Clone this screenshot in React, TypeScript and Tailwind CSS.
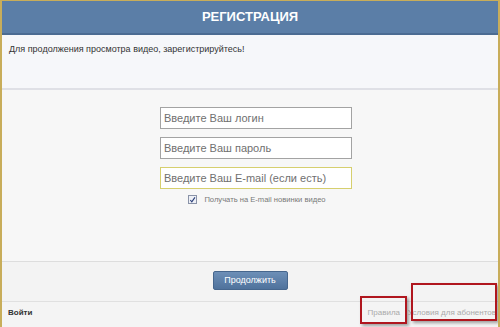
import React from 'react';

export default function App() {
  return (
    <div
      className="relative w-[500px] h-[327px] overflow-hidden bg-[#f4f4f4] border-l-2 border-t border-r-2 border-[#c8ad5a]"
      style={{ fontFamily: '"Liberation Sans", Arial, sans-serif' }}
    >
      {/* header */}
      <div className="h-[34px] bg-[#5b7ea7] border-b-2 border-[#4b6b92] flex items-center justify-center">
        <h1 className="text-white font-bold text-[13px]">РЕГИСТРАЦИЯ</h1>
      </div>

      {/* notice */}
      <div className="h-[55px] bg-[#f6f7fa] border-b-2 border-[#dfe0e6] px-[7px] pt-[8px]">
        <p className="text-[9px] text-[#333]">Для продолжения просмотра видео, зарегистрируйтесь!</p>
      </div>

      {/* form */}
      <div className="h-[172px] bg-[#f7f7f7] border-b border-[#dddddd] flex flex-col items-center pt-[17px]">
        <div className="flex flex-col gap-[8px] w-[192px] ml-[12px]">
          <input
            className="h-[22px] w-full bg-white border border-[#a3a3a3] px-[3px] text-[11px] text-[#666] placeholder:text-[#707070] outline-none"
            placeholder="Введите Ваш логин"
          />
          <input
            className="h-[22px] w-full bg-white border border-[#a3a3a3] px-[3px] text-[11px] text-[#666] placeholder:text-[#707070] outline-none"
            placeholder="Введите Ваш пароль"
          />
          <input
            className="h-[22px] w-full bg-white border border-[#d6cf6e] px-[3px] text-[11px] text-[#666] placeholder:text-[#707070] outline-none"
            placeholder="Введите Ваш E-mail (если есть)"
          />
        </div>
        <label className="flex items-center gap-[7px] mt-[5px] ml-[14px]">
          <span className="w-[9px] h-[9px] border border-[#8a93a8] bg-[#eef0f6] flex items-center justify-center">
            <svg width="8" height="8" viewBox="0 0 8 8">
              <path d="M1.5 4 L3.2 6 L6.8 1" stroke="#2a3f7a" strokeWidth="1.3" fill="none" />
            </svg>
          </span>
          <span className="text-[7.6px] text-[#777]">Получать на E-mail новинки видео</span>
        </label>
      </div>

      {/* button */}
      <div className="h-[40px] bg-[#f3f3f3] border-b border-[#e0e0e0] flex justify-center items-start pt-[9px]">
        <button className="w-[75px] h-[19px] rounded-[2px] bg-gradient-to-b from-[#6d8fb7] to-[#4f729c] border border-[#46668d] text-white text-[9px]">
          Продолжить
        </button>
      </div>

      {/* footer */}
      <div className="flex items-center justify-between pl-[6px] pr-[2px] pt-[5px]">
        <span className="text-[8px] font-bold text-[#333]">Войти</span>
        <div className="flex gap-[8px] text-[8px] text-[#aaa]">
          <span>Правила</span>
          <span>Условия для абонентов</span>
        </div>
      </div>

      {/* annotation boxes */}
      <div className="absolute left-[358px] top-[295px] w-[47px] h-[28px] border-2 border-[#b0161e] shadow-[2px_2px_3px_rgba(0,0,0,0.35)]" />
      <div className="absolute left-[409px] top-[282px] w-[86px] h-[38px] border-2 border-[#b0161e] shadow-[2px_2px_3px_rgba(0,0,0,0.35)]" />
    </div>
  );
}
